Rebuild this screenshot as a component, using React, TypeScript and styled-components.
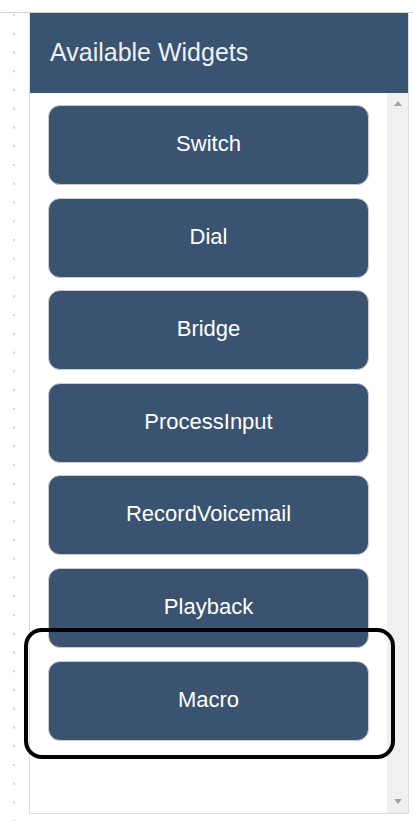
import React from "react";
import styled, { createGlobalStyle } from "styled-components";

const Global = createGlobalStyle`
  html, body { margin: 0; padding: 0; background: #ffffff; }
  body { font-family: "Liberation Sans", Arial, sans-serif; }
`;

const Page = styled.div`
  position: relative;
  width: 413px;
  height: 821px;
  overflow: hidden;
  background: #ffffff;
`;

const Canvas = styled.div`
  margin-top: 12px;
  height: 809px;
  border-top: 1px solid #d4d4d4;
  background-image: radial-gradient(circle at 1px 1px, #d6d6d6 1.1px, transparent 1.6px);
  background-size: 18.75px 18.75px;
  background-repeat: repeat-y;
  background-position: 13px 1px;
  display: flex;
  align-items: flex-start;
`;

const Panel = styled.div`
  margin-left: 29px;
  width: 378px;
  height: 800px;
  border: 1px solid #dcdcdc;
  border-top: none;
  background: #ffffff;
  display: flex;
  flex-direction: column;
`;

const Header = styled.div`
  height: 80px;
  background: #3a5370;
  color: #eef1f4;
  font-size: 25px;
  display: flex;
  align-items: center;
  padding-left: 20px;
  padding-bottom: 1px;
  box-sizing: border-box;
`;

const Body = styled.div`
  flex: 1;
  display: flex;
  min-height: 0;
`;

const List = styled.div`
  flex: 1;
  padding: 12px 18px 0 18px;
  display: flex;
  flex-direction: column;
  gap: 12.6px;
`;

const Widget = styled.div`
  height: 80px;
  box-sizing: border-box;
  border: 1px solid #c9ccd0;
  border-radius: 12px;
  background: #3a5370;
  color: #ffffff;
  font-size: 22px;
  display: flex;
  align-items: center;
  justify-content: center;
  padding-bottom: 2px;
`;

const Scrollbar = styled.div`
  width: 21px;
  background: #f0f0f0;
  display: flex;
  flex-direction: column;
  justify-content: space-between;
  align-items: center;
  padding: 8px 0 9px 1px;
  box-sizing: border-box;
`;

const Arrow = styled.div<{ $dir: "up" | "down" }>`
  width: 0;
  height: 0;
  border-left: 4.5px solid transparent;
  border-right: 4.5px solid transparent;
  ${(p) =>
    p.$dir === "up"
      ? "border-bottom: 5px solid #a3a3a3;"
      : "border-top: 5px solid #a3a3a3;"}
`;

const Highlight = styled.div`
  position: absolute;
  left: 24px;
  top: 628px;
  width: 371px;
  height: 131px;
  box-sizing: border-box;
  border: 4px solid #000000;
  border-radius: 18px;
  pointer-events: none;
`;

const widgets = [
  "Switch",
  "Dial",
  "Bridge",
  "ProcessInput",
  "RecordVoicemail",
  "Playback",
  "Macro",
];

export default function App() {
  return (
    <>
      <Global />
      <Page>
        <Canvas>
          <Panel>
            <Header>Available Widgets</Header>
            <Body>
              <List>
                {widgets.map((w) => (
                  <Widget key={w}>{w}</Widget>
                ))}
              </List>
              <Scrollbar>
                <Arrow $dir="up" />
                <Arrow $dir="down" />
              </Scrollbar>
            </Body>
          </Panel>
        </Canvas>
        <Highlight />
      </Page>
    </>
  );
}
